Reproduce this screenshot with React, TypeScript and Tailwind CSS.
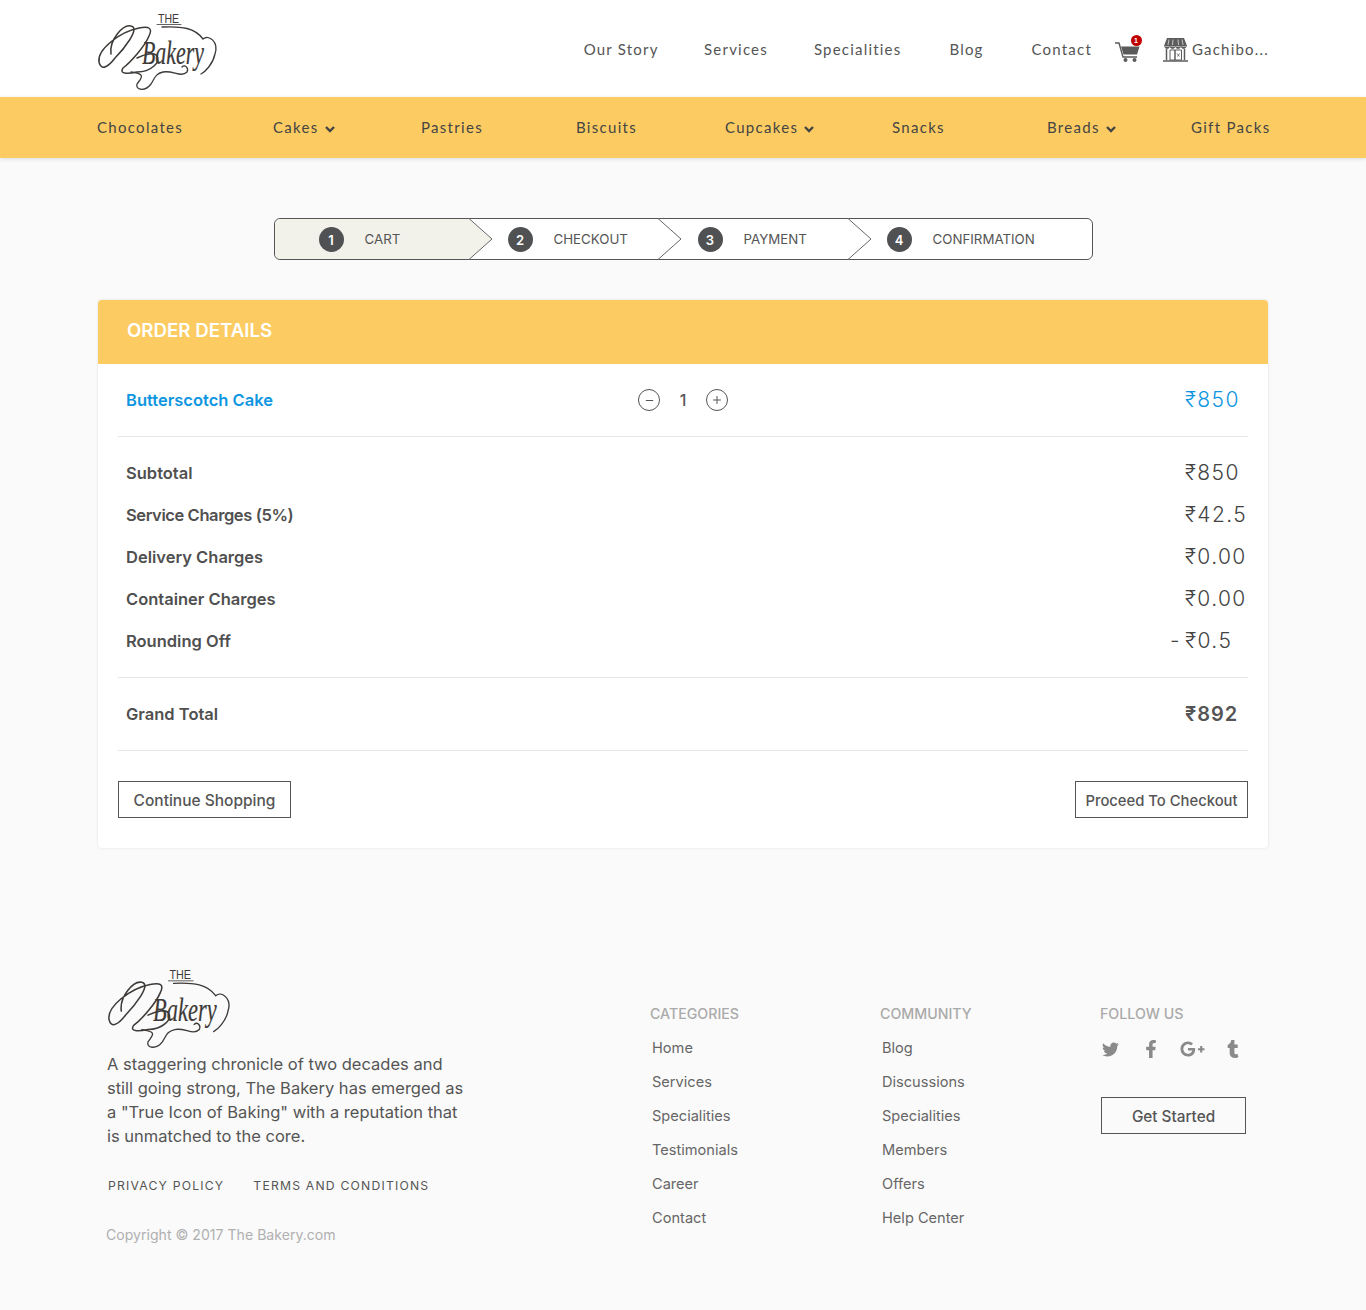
import { FaTwitter, FaFacebookF, FaGooglePlusG, FaTumblr } from 'react-icons/fa';
import { Minus, Plus } from 'lucide-react';

const sans = 'font-["Lato","Open_Sans",sans-serif]';

function Logo({ className }: { className: string }) {
  return (
    <svg viewBox="0 0 120 78" className={`overflow-visible ${className}`} fill="none" stroke="#3d3a38" strokeLinecap="round">
      <text x="61" y="10.500" fontFamily="'Liberation Sans', sans-serif" fontSize="13" fill="#3d3a38" stroke="none" textLength="21" lengthAdjust="spacingAndGlyphs">THE</text>
      <path d="M60 12.500h24" strokeWidth="0.8" />
      <path d="M65 15 C 85 14, 98 16, 106 27 C 112 22, 122 30, 118 42 C 116 52, 108 60, 104 62" strokeWidth="1.300" />
      <path d="M14 42 C 12 28, 26 12, 34 14 C 44 16, 26 38, 18 46 C 12 54, 4 60, 2 50 C 0 38, 22 20, 42 16 C 52 14, 56 16, 52 24 C 48 34, 34 50, 26 56 C 22 62, 30 62, 40 60 C 54 60, 64 50, 60 44 C 58 40, 48 42, 40 46" strokeWidth="1.500" />
      <text x="45" y="52" fontFamily="'Liberation Serif', serif" fontStyle="italic" fontSize="33" fill="#3d3a38" stroke="#3d3a38" strokeWidth="0.2" textLength="62" lengthAdjust="spacingAndGlyphs">Bakery</text>
      <path d="M34 60 C 50 62, 44 66, 40 72 C 38 78, 48 80, 54 72 C 58 66, 58 62, 66 60 C 76 58, 84 66, 90 60 C 92 56, 88 52, 85 55" strokeWidth="1.300" />
    </svg>
  );
}

function Cart() {
  return (
    <div className="relative w-[26px] h-[26px] ml-[1px]">
      <svg viewBox="0 0 26 26" className="w-[26px] h-[26px]" fill="#5a5a5a">
        <path d="M0 6h4l4 14h14" fill="none" stroke="#5a5a5a" strokeWidth="1.400" />
        <path d="M6 9.500h18.500l-2.500 8H8.500z" />
        <circle cx="10.500" cy="23" r="2" />
        <circle cx="19.500" cy="23" r="2" />
      </svg>
      <span className='absolute -top-[2px] right-[-1px] w-[11px] h-[11px] rounded-full bg-[#c00000] text-white text-[7px] leading-[11px] text-center font-bold font-["Liberation_Sans",sans-serif]'>1</span>
    </div>
  );
}

function Store() {
  return (
    <svg viewBox="0 0 25 25" className="w-[25px] h-[25px]" fill="none" stroke="#5c5c5c">
      <path d="M4 1h17l3 8H1z" fill="#5c5c5c" stroke="none" />
      <path d="M6 2.500 5 8M10 2.500 9.500 8M15 2.500l.5 5.500M19 2.500 20 8" stroke="#ddd" strokeWidth="0.8" />
      <path d="M1.500 9.500c1 2.500 4 2.500 5.500 0 1 2.500 4 2.500 5.500 0 1 2.500 4 2.500 5.500 0 1 2.500 4 2.500 5.500 0" fill="#5c5c5c" />
      <path d="M3.500 12v11M21.500 12v11M0 24h25" strokeWidth="1.500" />
      <path d="M7 13h5v10H7zM12 13h6.500v10H12z" />
      <path d="M14 16.500l2.500 3M16.500 16.500l-2 3" strokeWidth="0.8" />
    </svg>
  );
}

function Stepper() {
  const steps = [
    { n: 1, label: 'CART', cls: 'w-[194px] pl-[44px] bg-[#f2f1ea] rounded-l-[6px]', fill: '#f2f1ea' },
    { n: 2, label: 'CHECKOUT', cls: 'w-[189px] pl-[39px]', fill: '#ffffff' },
    { n: 3, label: 'PAYMENT', cls: 'w-[190px] pl-[40px]', fill: '#ffffff' },
    { n: 4, label: 'CONFIRMATION', cls: 'flex-1 pl-[39px]', fill: '' },
  ];
  return (
    <div className="w-[819px] h-[42px] mx-auto border border-[#555] rounded-[6px] bg-white flex">
      {steps.map((s) => (
        <div key={s.n} className={`relative flex items-center gap-[21px] ${s.cls}`}>
          <span className="w-[25px] h-[25px] rounded-full bg-[#505153] text-white text-[13px] font-semibold leading-[26px] text-center">{s.n}</span>
          <span className="text-[13.3px] text-[#555] pt-[1px]">{s.label}</span>
          {s.fill && (
            <svg viewBox="0 0 24 42" className="absolute top-[-1px] right-[-24px] w-[24px] h-[42px] z-10">
              <path d="M0 0.500 23 21 0 41.500" fill={s.fill} stroke="#666" strokeWidth="1" />
            </svg>
          )}
        </div>
      ))}
    </div>
  );
}

function Row({ label, value, neg, labelCls = '' }: { label: string; value: string; neg?: boolean; labelCls?: string }) {
  return (
    <div className="h-[42px] flex items-center justify-between pl-[8px]">
      <span className={`text-[16.5px] font-semibold text-[#505050] ${labelCls}`}>{label}</span>
      <span className={`text-[21px] font-light text-[#444] tracking-[1.4px] whitespace-nowrap ${neg ? 'w-[78px] [word-spacing:-3px]' : 'w-[63px]'}`}>{value}</span>
    </div>
  );
}

function LinkCol({ title, items, width }: { title: string; items: string[]; width: string }) {
  return (
    <div className={width}>
      <h4 className="text-[14.2px] font-medium text-[#aaa] leading-[20px] mt-[36px] mb-[14px]">{title}</h4>
      <ul className="pl-[2px]">
        {items.map((i) => (
          <li key={i} className="h-[34px] leading-[20px] text-[14.6px] text-[#666]">{i}</li>
        ))}
      </ul>
    </div>
  );
}

export default function App() {
  const nav = [
    { name: 'Our Story', cls: 'mr-[45.500px]' },
    { name: 'Services', cls: 'mr-[46px]' },
    { name: 'Specialities', cls: 'mr-[48px]' },
    { name: 'Blog', cls: 'mr-[48px]' },
    { name: 'Contact', cls: '' },
  ];
  const cats = [
    { name: 'Chocolates', w: 'w-[176px]', drop: false },
    { name: 'Cakes', w: 'w-[148px]', drop: true },
    { name: 'Pastries', w: 'w-[155px]', drop: false },
    { name: 'Biscuits', w: 'w-[149px]', drop: false },
    { name: 'Cupcakes', w: 'w-[167px]', drop: true },
    { name: 'Snacks', w: 'w-[155px]', drop: false },
    { name: 'Breads', w: 'w-[144px]', drop: true },
    { name: 'Gift Packs', w: 'w-[78px]', drop: false },
  ];
  return (
    <div className='min-h-[1310px] bg-[#fafafa] font-["Inter",sans-serif] text-[#555]'>
      <header className="bg-white h-[97px]">
        <div className={`w-[1172px] mx-auto h-full flex items-center justify-between ${sans}`}>
          <Logo className="w-[120px] h-[78px] mt-[5px]" />
          <nav className="flex items-center text-[15px] tracking-[1.2px] text-[#555] pt-[2px]">
            <div className="flex mr-[22px]">
              {nav.map((n) => <a key={n.name} className={n.cls}>{n.name}</a>)}
            </div>
            <Cart />
            <div className="flex items-center gap-[4px] ml-[22px]">
              <Store />
              <span>Gachibo...</span>
            </div>
          </nav>
        </div>
      </header>

      <div className="bg-[#fccc62] h-[61px] shadow-[0_1px_4px_rgba(0,0,0,0.12)]">
        <div className={`w-[1172px] mx-auto h-full flex items-center text-[15px] tracking-[1.3px] text-[#444] ${sans}`}>
          {cats.map((c) => (
            <span key={c.name} className={`flex items-center gap-[6px] whitespace-nowrap ${c.w}`}>
              {c.name}
              {c.drop && (
                <svg viewBox="0 0 10 7" className="w-[10px] h-[7px] mt-[4px]" fill="none" stroke="#444" strokeWidth="2.400">
                  <path d="M1 1l4 4 4-4" />
                </svg>
              )}
            </span>
          ))}
        </div>
      </div>

      <main className="pt-[60px]">
        <Stepper />

        <section className="w-[1170px] mx-auto mt-[40px] bg-white rounded-[4px] shadow-[0_0_3px_rgba(0,0,0,0.1)] overflow-hidden">
          <div className="h-[64px] bg-[#fccc62] flex items-center pl-[29px] pb-[2px] text-[18.700px] font-semibold text-white">ORDER DETAILS</div>
          <div className="px-[20px]">
            <div className="h-[73px] flex items-center border-b border-[#e6e6e6] pl-[8px]">
              <span className="w-[512px] text-[16.5px] font-semibold text-[#0f96e0]">Butterscotch Cake</span>
              <div className="flex items-center flex-1 text-[#555]">
                <span className="w-[22px] h-[22px] rounded-full border border-[#555] flex items-center justify-center"><Minus className="w-[11px] h-[11px]" strokeWidth={2.500} /></span>
                <span className="w-[46px] text-center text-[16px] font-medium">1</span>
                <span className="w-[22px] h-[22px] rounded-full border border-[#555] flex items-center justify-center"><Plus className="w-[12px] h-[12px]" strokeWidth={2} /></span>
              </div>
              <span className="w-[63px] text-[21px] font-light tracking-[1.4px] text-[#0f96e0]">₹850</span>
            </div>
            <div className="py-[15px] border-b border-[#e6e6e6]">
              <Row label="Subtotal" value="₹850" />
              <Row label="Service Charges (5%)" value="₹42.5" labelCls="tracking-[-0.4px]" />
              <Row label="Delivery Charges" value="₹0.00" />
              <Row label="Container Charges" value="₹0.00" />
              <Row label="Rounding Off" value="- ₹0.5" neg />
            </div>
            <div className="h-[73px] flex items-center justify-between pl-[8px] border-b border-[#e6e6e6]">
              <span className="text-[16.5px] font-semibold text-[#505050]">Grand Total</span>
              <span className="w-[63px] text-[20px] font-semibold tracking-[1px] text-[#555]">₹892</span>
            </div>
            <div className="py-[30px] flex justify-between">
              <button className="w-[173px] h-[37px] pt-[3px] border border-[#555] text-[15.500px] font-medium text-[#555]">Continue Shopping</button>
              <button className="w-[173px] h-[37px] pt-[3px] border border-[#555] text-[14.800px] font-medium text-[#555]">Proceed To Checkout</button>
            </div>
          </div>
        </section>
      </main>

      <footer className="w-[1172px] mx-auto mt-[120px] flex">
        <div className="w-[553px] pl-[9px]">
          <Logo className="w-[125px] h-[80px]" />
          <p className="w-[360px] pl-[1px] mt-[4px] text-[16.5px] leading-[24px] text-[#555]">
            A staggering chronicle of two decades and still going strong, The Bakery has emerged as a "True Icon of Baking" with a reputation that is unmatched to the core.
          </p>
          <div className="flex gap-[29px] pl-[2px] mt-[28px] text-[12.200px] tracking-[1.2px] text-[#555] leading-[20px]">
            <a>PRIVACY POLICY</a>
            <a>TERMS AND CONDITIONS</a>
          </div>
          <p className="mt-[29px] text-[14.100px] text-[#b0b0b0] leading-[20px]">Copyright © 2017 The Bakery.com</p>
        </div>
        <LinkCol title="CATEGORIES" width="w-[230px]" items={['Home', 'Services', 'Specialities', 'Testimonials', 'Career', 'Contact']} />
        <LinkCol title="COMMUNITY" width="w-[220px]" items={['Blog', 'Discussions', 'Specialities', 'Members', 'Offers', 'Help Center']} />
        <div className="flex-1">
          <h4 className="text-[14.2px] font-medium text-[#aaa] leading-[20px] mt-[36px]">FOLLOW US</h4>
          <div className="flex items-center gap-[21px] mt-[15px] text-[#8a8a8a] h-[20px]">
            <span className="w-[20px] flex justify-center"><FaTwitter className="w-[17px] h-[17px] shrink-0" /></span>
            <span className="w-[20px] flex justify-center"><FaFacebookF className="w-[18px] h-[18px] shrink-0" /></span>
            <span className="w-[20px] flex justify-center"><FaGooglePlusG className="w-[25px] h-[20px] shrink-0" /></span>
            <span className="w-[20px] flex justify-center"><FaTumblr className="w-[18px] h-[18px] shrink-0" /></span>
          </div>
          <button className="ml-[1px] mt-[38px] w-[145px] h-[37px] pt-[3px] border border-[#555] text-[15.300px] font-medium text-[#555]">Get Started</button>
        </div>
      </footer>
    </div>
  );
}
